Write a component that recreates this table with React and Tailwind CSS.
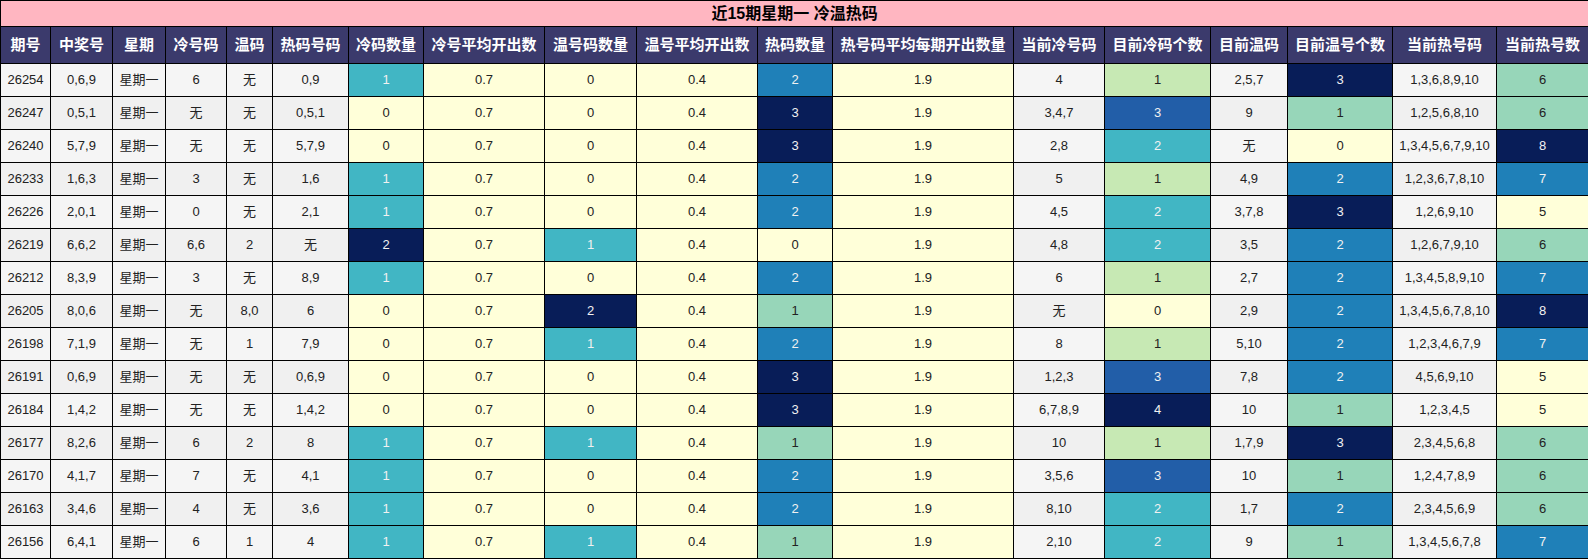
import React from "react";

const widths = [50, 62, 53, 61, 46, 76, 75, 121, 92, 121, 75, 181, 91, 106, 77, 105, 104, 92];
const headers = ["期号", "中奖号", "星期", "冷号码", "温码", "热码号码", "冷码数量", "冷号平均开出数", "温号码数量", "温号平均开出数", "热码数量", "热号码平均每期开出数量", "当前冷号码", "目前冷码个数", "目前温码", "目前温号个数", "当前热号码", "当前热号数"];

const rows = [
  ["26254", "0,6,9", "6", "无", "0,9", 1, 0, 2, "4", 1, "2,5,7", 3, "1,3,6,8,9,10", 6],
  ["26247", "0,5,1", "无", "无", "0,5,1", 0, 0, 3, "3,4,7", 3, "9", 1, "1,2,5,6,8,10", 6],
  ["26240", "5,7,9", "无", "无", "5,7,9", 0, 0, 3, "2,8", 2, "无", 0, "1,3,4,5,6,7,9,10", 8],
  ["26233", "1,6,3", "3", "无", "1,6", 1, 0, 2, "5", 1, "4,9", 2, "1,2,3,6,7,8,10", 7],
  ["26226", "2,0,1", "0", "无", "2,1", 1, 0, 2, "4,5", 2, "3,7,8", 3, "1,2,6,9,10", 5],
  ["26219", "6,6,2", "6,6", "2", "无", 2, 1, 0, "4,8", 2, "3,5", 2, "1,2,6,7,9,10", 6],
  ["26212", "8,3,9", "3", "无", "8,9", 1, 0, 2, "6", 1, "2,7", 2, "1,3,4,5,8,9,10", 7],
  ["26205", "8,0,6", "无", "8,0", "6", 0, 2, 1, "无", 0, "2,9", 2, "1,3,4,5,6,7,8,10", 8],
  ["26198", "7,1,9", "无", "1", "7,9", 0, 1, 2, "8", 1, "5,10", 2, "1,2,3,4,6,7,9", 7],
  ["26191", "0,6,9", "无", "无", "0,6,9", 0, 0, 3, "1,2,3", 3, "7,8", 2, "4,5,6,9,10", 5],
  ["26184", "1,4,2", "无", "无", "1,4,2", 0, 0, 3, "6,7,8,9", 4, "10", 1, "1,2,3,4,5", 5],
  ["26177", "8,2,6", "6", "2", "8", 1, 1, 1, "10", 1, "1,7,9", 3, "2,3,4,5,6,8", 6],
  ["26170", "4,1,7", "7", "无", "4,1", 1, 0, 2, "3,5,6", 3, "10", 1, "1,2,4,7,8,9", 6],
  ["26163", "3,4,6", "4", "无", "3,6", 1, 0, 2, "8,10", 2, "1,7", 2, "2,3,4,5,6,9", 6],
  ["26156", "6,4,1", "6", "1", "4", 1, 1, 1, "2,10", 2, "9", 1, "1,3,4,5,6,7,8", 7],
];

const p3 = { 0: "bg-[#ffffd9] text-[#222]", 1: "bg-[#41b6c4] text-[#f1f1f1]", 2: "bg-[#081d58] text-[#f1f1f1]" };
const p4 = { 0: "bg-[#ffffd9] text-[#222]", 1: "bg-[#97d6b9] text-[#222]", 2: "bg-[#1f80b8] text-[#f1f1f1]", 3: "bg-[#081d58] text-[#f1f1f1]" };
const p5 = { 0: "bg-[#ffffd9] text-[#222]", 1: "bg-[#c7e9b4] text-[#222]", 2: "bg-[#41b6c4] text-[#f1f1f1]", 3: "bg-[#225ea8] text-[#f1f1f1]", 4: "bg-[#081d58] text-[#f1f1f1]" };

const yellow = "bg-[#ffffd9] text-[#222]";

function Cell({ cls, children }) {
  return (
    <td className={`border border-black text-center align-middle text-[13px] p-0 ${cls}`}>{children}</td>
  );
}

export default function App() {
  return (
    <div className="w-[1588px] h-[559px] bg-white" style={{ fontFamily: '"Liberation Sans", "Noto Sans CJK SC", sans-serif' }}>
      <table className="border-collapse table-fixed w-[1588px]">
        <colgroup>
          {widths.map((w, i) => (
            <col key={i} style={{ width: w }} />
          ))}
        </colgroup>
        <thead>
          <tr className="h-[26px]">
            <th colSpan={18} className="border border-black bg-[#ffb6c1] text-[16px] font-bold text-black text-center p-0">
              近15期星期一 冷温热码
            </th>
          </tr>
          <tr className="h-[37px]">
            {headers.map((h, i) => (
              <th key={i} className="border border-black bg-[#3b3a6c] text-white text-[15px] font-bold text-center p-0 whitespace-nowrap">
                {h}
              </th>
            ))}
          </tr>
        </thead>
        <tbody>
          {rows.map((r, i) => {
            const g = i % 2 === 0 ? "bg-[#f5f5f5] text-[#222]" : "bg-[#f0f0f0] text-[#222]";
            return (
              <tr key={i} className="h-[33px]">
                <Cell cls={g}>{r[0]}</Cell>
                <Cell cls={g}>{r[1]}</Cell>
                <Cell cls={g}>星期一</Cell>
                <Cell cls={g}>{r[2]}</Cell>
                <Cell cls={g}>{r[3]}</Cell>
                <Cell cls={g}>{r[4]}</Cell>
                <Cell cls={p3[r[5]]}>{r[5]}</Cell>
                <Cell cls={yellow}>0.7</Cell>
                <Cell cls={p3[r[6]]}>{r[6]}</Cell>
                <Cell cls={yellow}>0.4</Cell>
                <Cell cls={p4[r[7]]}>{r[7]}</Cell>
                <Cell cls={yellow}>1.9</Cell>
                <Cell cls={g}>{r[8]}</Cell>
                <Cell cls={p5[r[9]]}>{r[9]}</Cell>
                <Cell cls={g}>{r[10]}</Cell>
                <Cell cls={p4[r[11]]}>{r[11]}</Cell>
                <Cell cls={g}>{r[12]}</Cell>
                <Cell cls={p4[r[13] - 5]}>{r[13]}</Cell>
              </tr>
            );
          })}
        </tbody>
      </table>
    </div>
  );
}
